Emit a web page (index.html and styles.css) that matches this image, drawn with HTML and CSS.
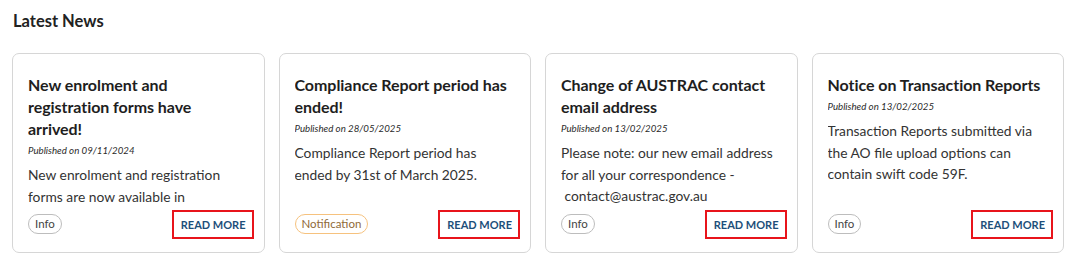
FILE: index.html
```html
<!DOCTYPE html>
<html lang="en">
<head>
<meta charset="utf-8">
<title>Latest News</title>
<link rel="stylesheet" href="styles.css">
</head>
<body>
<section class="news">
  <h2 class="news-heading">Latest News</h2>
  <div class="news-grid">
    <article class="card">
      <div class="card-content">
        <h3 class="card-title">New enrolment and registration forms have arrived!</h3>
        <p class="card-date">Published on 09/11/2024</p>
        <p class="card-body">New enrolment and registration forms are now available in</p>
      </div>
      <div class="card-footer">
        <span class="badge">Info</span>
        <a class="read-more" href="#">READ MORE</a>
      </div>
    </article>
    <article class="card">
      <div class="card-content">
        <h3 class="card-title">Compliance Report period has ended!</h3>
        <p class="card-date">Published on 28/05/2025</p>
        <p class="card-body">Compliance Report period has ended by 31st of March 2025.</p>
      </div>
      <div class="card-footer">
        <span class="badge badge-notification">Notification</span>
        <a class="read-more" href="#">READ MORE</a>
      </div>
    </article>
    <article class="card">
      <div class="card-content">
        <h3 class="card-title">Change of AUSTRAC contact email address</h3>
        <p class="card-date">Published on 13/02/2025</p>
        <p class="card-body">Please note: our new email address for all your correspondence - &nbsp;contact@austrac.gov.au</p>
      </div>
      <div class="card-footer">
        <span class="badge">Info</span>
        <a class="read-more" href="#">READ MORE</a>
      </div>
    </article>
    <article class="card">
      <div class="card-content">
        <h3 class="card-title">Notice on Transaction Reports</h3>
        <p class="card-date">Published on 13/02/2025</p>
        <p class="card-body">Transaction Reports submitted via the AO file upload options can contain swift code 59F.</p>
      </div>
      <div class="card-footer">
        <span class="badge">Info</span>
        <a class="read-more" href="#">READ MORE</a>
      </div>
    </article>
  </div>
</section>
</body>
</html>
```

FILE: styles.css
```css
* { box-sizing: border-box; }

html, body {
  margin: 0;
  padding: 0;
  background: #ffffff;
}

body {
  font-family: Lato, "Noto Sans", "Liberation Sans", sans-serif;
  color: #222222;
}

.news {
  padding: 9px 12px 0 12px;
}

.news-heading {
  margin: 0 0 0 1px;
  font-size: 16.5px;
  line-height: 24px;
  font-weight: 700;
  color: #222222;
}

.news-grid {
  margin-top: 20px;
  display: grid;
  grid-template-columns: repeat(4, 1fr);
  gap: 14px;
}

.card {
  height: 200px;
  border: 1px solid #d6d6d6;
  border-radius: 7px;
  padding: 20px 18px 13px 15px;
  display: flex;
  flex-direction: column;
  background: #ffffff;
}

.card-content {
  flex: 1;
  min-height: 0;
  overflow: hidden;
}

.card-title {
  margin: 0;
  font-size: 16px;
  line-height: 22px;
  font-weight: 700;
  color: #1e1e1e;
  letter-spacing: -0.05px;
}

.card-date {
  margin: 3px 0 0 0;
  font-size: 9.7px;
  line-height: 14px;
  font-style: italic;
  color: #2a2a2a;
}

.card-body {
  margin: 7px 0 0 0;
  font-size: 13.8px;
  line-height: 21.5px;
  color: #333333;
}

.card-footer {
  height: 29px;
  margin-right: -8px;
  display: flex;
  align-items: center;
  justify-content: space-between;
}

.badge {
  display: inline-block;
  height: 20px;
  line-height: 18px;
  padding: 0 6px;
  border: 1px solid #bdbdbd;
  border-radius: 10px;
  font-size: 11.5px;
  color: #444444;
  margin-top: -2px;
}

.badge-notification {
  border-color: #f6c27e;
  color: #8f6a38;
}

.read-more {
  display: inline-block;
  height: 29px;
  line-height: 25px;
  padding: 0 6px 0 7px;
  border: 2px solid #e8141b;
  font-size: 11px;
  font-weight: 700;
  color: #1d4f7a;
  text-decoration: none;
}
```
